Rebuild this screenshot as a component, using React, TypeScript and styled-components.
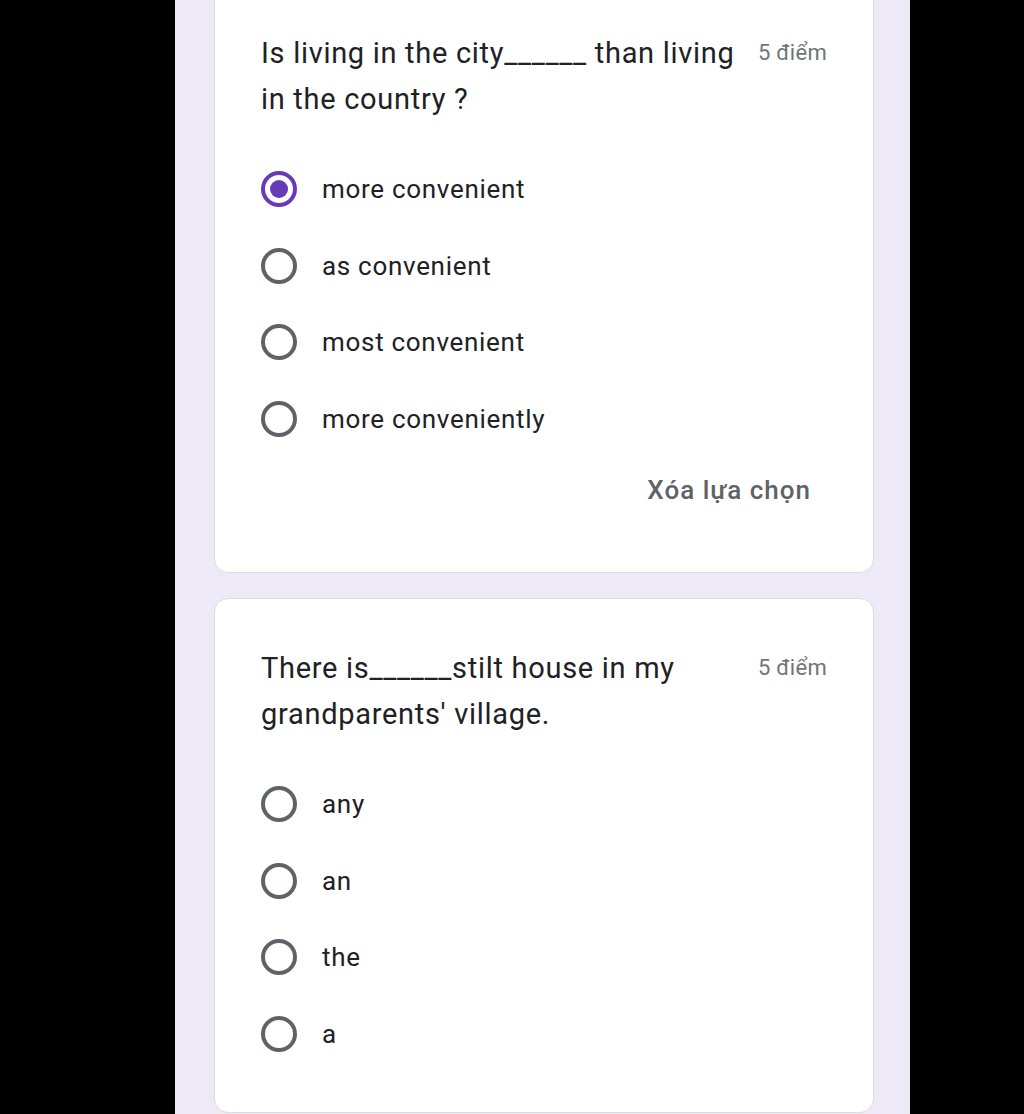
import styled, { createGlobalStyle } from "styled-components";

const GlobalStyle = createGlobalStyle`
  html, body {
    margin: 0;
    padding: 0;
    background: #000;
    font-family: Roboto, "Noto Sans", Arial, sans-serif;
  }
`;

const Screen = styled.div`
  width: 1024px;
  height: 1114px;
  overflow: hidden;
  background: #000;
  display: flex;
`;

const Column = styled.div`
  margin-left: 175px;
  width: 735px;
  box-sizing: border-box;
  padding: 0 36px 0 39px;
  background: #ede9f7;
  display: flex;
  flex-direction: column;
  gap: 25px;
`;

const Card = styled.section<{ $first?: boolean }>`
  background: #fff;
  border: 1px solid #dcdae3;
  border-radius: 14px;
  box-sizing: border-box;
  padding: 46px 46px 0 46px;
  margin-top: ${(p) => (p.$first ? "-17px" : "0")};
  padding-bottom: ${(p) => (p.$first ? "58px" : "40px")};
`;

const TitleRow = styled.div`
  display: flex;
  align-items: flex-start;
  gap: 8px;
`;

const Title = styled.div`
  flex: 1;
  font-size: 29px;
  line-height: 46px;
  color: #202124;
  letter-spacing: 0.7px;
`;

const Points = styled.div`
  white-space: nowrap;
  font-size: 22px;
  line-height: 46px;
  color: #70757a;
  letter-spacing: 0.3px;
`;

const Options = styled.div`
  margin-top: 29px;
  display: flex;
  flex-direction: column;
`;

const Option = styled.label`
  display: flex;
  align-items: center;
  height: 76.5px;
  gap: 25px;
  font-size: 26px;
  color: #202124;
  letter-spacing: 0.7px;
`;

const Radio = styled.span<{ $checked?: boolean }>`
  width: 36px;
  height: 36px;
  box-sizing: border-box;
  border-radius: 50%;
  border: 4px solid ${(p) => (p.$checked ? "#673ab7" : "#5f6368")};
  display: flex;
  align-items: center;
  justify-content: center;
  flex-shrink: 0;
  &::after {
    content: "";
    width: 18px;
    height: 18px;
    border-radius: 50%;
    background: #673ab7;
    display: ${(p) => (p.$checked ? "block" : "none")};
  }
`;

const ClearRow = styled.div`
  display: flex;
  justify-content: flex-end;
  margin-top: 9px;
`;

const ClearButton = styled.button`
  border: none;
  background: none;
  font-family: inherit;
  font-size: 26px;
  font-weight: 500;
  line-height: 48px;
  padding: 0 16px;
  color: #5f6368;
  letter-spacing: 1px;
`;

type Question = {
  title: string;
  options: string[];
  selected?: number;
};

const questions: Question[] = [
  {
    title: "Is living in the city______ than living in the country ?",
    options: ["more convenient", "as convenient", "most convenient", "more conveniently"],
    selected: 0,
  },
  {
    title: "There is______stilt house in my grandparents' village.",
    options: ["any", "an", "the", "a"],
  },
];

export default function App() {
  return (
    <>
      <GlobalStyle />
      <Screen>
        <Column>
          {questions.map((q, i) => (
            <Card key={i} $first={i === 0}>
              <TitleRow>
                <Title>{q.title}</Title>
                <Points>5 điểm</Points>
              </TitleRow>
              <Options>
                {q.options.map((o, j) => (
                  <Option key={o}>
                    <Radio $checked={q.selected === j} />
                    {o}
                  </Option>
                ))}
              </Options>
              {q.selected !== undefined && (
                <ClearRow>
                  <ClearButton>Xóa lựa chọn</ClearButton>
                </ClearRow>
              )}
            </Card>
          ))}
        </Column>
      </Screen>
    </>
  );
}
